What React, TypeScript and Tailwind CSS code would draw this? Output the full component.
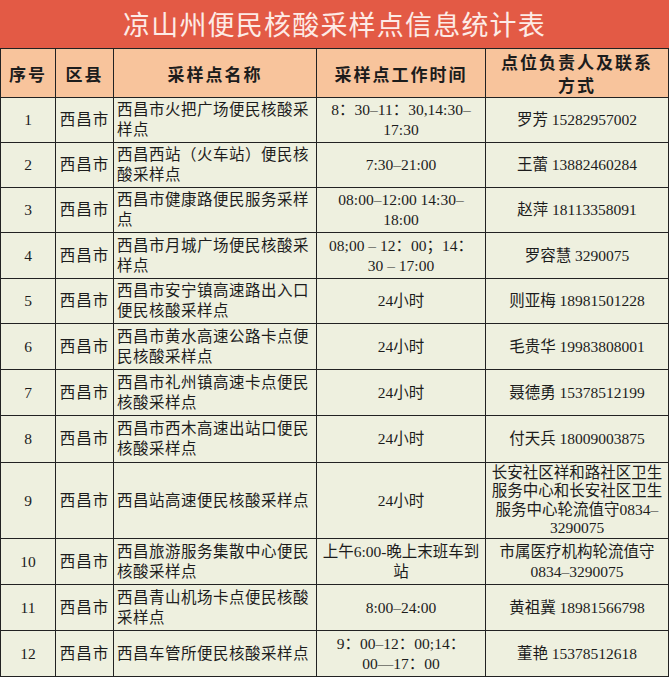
import React from "react";

type Row = {
  no: string;
  name: React.ReactNode;
  time: React.ReactNode;
  contact: React.ReactNode;
  h: string;
};

const rows: Row[] = [
  { no: "1", name: <>西昌市火把广场便民核酸采<br />样点</>, time: <>8：30–11：30,14:30–<br />17:30</>, contact: "罗芳 15282957002", h: "h-[45px]" },
  { no: "2", name: <>西昌西站（火车站）便民核<br />酸采样点</>, time: "7:30–21:00", contact: "王蕾 13882460284", h: "h-[45px]" },
  { no: "3", name: <>西昌市健康路便民服务采样<br />点</>, time: <>08:00–12:00 14:30–<br />18:00</>, contact: "赵萍 18113358091", h: "h-[45px]" },
  { no: "4", name: <>西昌市月城广场便民核酸采<br />样点</>, time: <>08;00 – 12：00；14：<br />30 – 17:00</>, contact: "罗容慧 3290075", h: "h-[46px]" },
  { no: "5", name: <>西昌市安宁镇高速路出入口<br />便民核酸采样点</>, time: "24小时", contact: "则亚梅 18981501228", h: "h-[45px]" },
  { no: "6", name: <>西昌市黄水高速公路卡点便<br />民核酸采样点</>, time: "24小时", contact: "毛贵华 19983808001", h: "h-[46px]" },
  { no: "7", name: <>西昌市礼州镇高速卡点便民<br />核酸采样点</>, time: "24小时", contact: "聂德勇 15378512199", h: "h-[46px]" },
  { no: "8", name: <>西昌市西木高速出站口便民<br />核酸采样点</>, time: "24小时", contact: "付天兵 18009003875", h: "h-[47px]" },
  { no: "9", name: "西昌站高速便民核酸采样点", time: "24小时", contact: <span className="block leading-[18.5px]">长安社区祥和路社区卫生<br />服务中心和长安社区卫生<br />服务中心轮流值守0834–<br />3290075</span>, h: "h-[76px]" },
  { no: "10", name: <>西昌旅游服务集散中心便民<br />核酸采样点</>, time: <>上午6:00-晚上末班车到<br />站</>, contact: <>市属医疗机构轮流值守<br />0834–3290075</>, h: "h-[46px]" },
  { no: "11", name: <>西昌青山机场卡点便民核酸<br />采样点</>, time: "8:00–24:00", contact: "黄祖冀 18981566798", h: "h-[46px]" },
  { no: "12", name: "西昌车管所便民核酸采样点", time: <>9：00–12：00;14：<br />00—17：00</>, contact: "董艳 15378512618", h: "h-[46px]" },
];

export default function App() {
  return (
    <div className="w-[669px] h-[677px] overflow-hidden bg-[#eef0df]">
      <div
        className="h-[48px] bg-[#e35a45] flex items-center justify-center text-[#fdebe6] text-[27px] tracking-[1.2px]"
        style={{ fontFamily: '"Noto Sans CJK SC", "Noto Sans", sans-serif' }}
      >
        凉山州便民核酸采样点信息统计表
      </div>
      <table className="table-fixed w-[668px] border-collapse text-[#1c1c1c]">
        <colgroup>
          <col className="w-[55px]" />
          <col className="w-[58px]" />
          <col className="w-[203px]" />
          <col className="w-[169px]" />
          <col className="w-[183px]" />
        </colgroup>
        <thead>
          <tr
            className="h-[49px] bg-[#f8c49c] text-[17px] font-bold tracking-[2px] leading-[23px]"
            style={{ fontFamily: '"Noto Sans CJK SC", "Noto Sans", sans-serif' }}
          >
            <th className="border border-[#222] text-center font-bold p-0">序号</th>
            <th className="border border-[#222] text-center font-bold p-0">区县</th>
            <th className="border border-[#222] text-center font-bold p-0">采样点名称</th>
            <th className="border border-[#222] text-center font-bold p-0">采样点工作时间</th>
            <th className="border border-[#222] text-center font-bold p-0">点位负责人及联系<br />方式</th>
          </tr>
        </thead>
        <tbody
          className="text-[15.5px] leading-[20px]"
          style={{ fontFamily: '"Liberation Serif", "Noto Sans CJK SC", serif' }}
        >
          {rows.map((r) => (
            <tr key={r.no} className={r.h}>
              <td className="border border-[#222] text-center p-0">{r.no}</td>
              <td className="border border-[#222] text-center p-0 tracking-[1px]">西昌市</td>
              <td className="border border-[#222] text-left pl-[3px] pr-0 py-0 whitespace-nowrap tracking-[0.5px]">{r.name}</td>
              <td className="border border-[#222] text-center p-0 whitespace-nowrap">{r.time}</td>
              <td className="border border-[#222] text-center p-0 whitespace-nowrap">{r.contact}</td>
            </tr>
          ))}
        </tbody>
      </table>
    </div>
  );
}
